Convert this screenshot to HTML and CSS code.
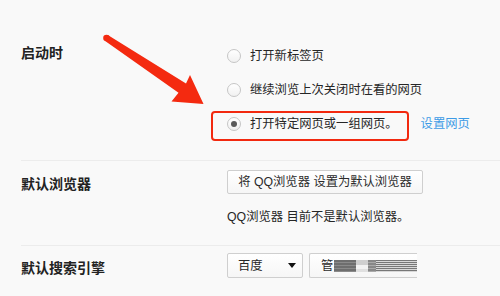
FILE: index.html
```html
<!DOCTYPE html>
<html lang="zh-CN">
<head>
<meta charset="utf-8">
<title>设置</title>
<link rel="stylesheet" href="styles.css">
</head>
<body>
<div class="page">
  <section class="section startup">
    <div class="label label-startup">启动时</div>
    <div class="options">
      <div class="option"><span class="radio"></span><span>打开新标签页</span></div>
      <div class="option"><span class="radio"></span><span>继续浏览上次关闭时在看的网页</span></div>
      <div class="option option-marked">
        <span class="radio checked"></span><span>打开特定网页或一组网页。</span>
        <a class="link">设置网页</a>
        <span class="highlight"></span>
      </div>
    </div>
  </section>
  <section class="section browser">
    <div class="label label-browser">默认浏览器</div>
    <div class="stack">
      <button class="btn btn-default">将 QQ浏览器 设置为默认浏览器</button>
      <div class="note">QQ浏览器 目前不是默认浏览器。</div>
    </div>
  </section>
  <section class="section search">
    <div class="label label-search">默认搜索引擎</div>
    <div class="controls">
      <div class="select"><span>百度</span><span class="caret"></span></div>
      <div class="btn btn-manage"><span>管</span><span class="mosaic"><i class="m1"></i><i class="m2"></i><i class="m3"></i><i class="m4"></i></span></div>
    </div>
  </section>
  <svg class="arrow" viewBox="0 0 500 296" width="500" height="296">
    <circle cx="106.5" cy="38" r="3.3" fill="#f42a10"/>
    <polygon points="108.2,35.3 186,83.5 190,75 203.5,104 171.5,101.5 178.5,92.8 104.8,40.7" fill="#f42a10"/>
  </svg>
</div>
</body>
</html>
```
FILE: styles.css
```css
* { box-sizing: border-box; }
html, body { margin: 0; padding: 0; }
body {
  background: #f9f9f9;
  font-family: "Liberation Sans", "Noto Sans CJK SC", sans-serif;
  font-size: 12.3px;
  color: #262626;
  width: 500px;
  height: 296px;
  overflow: hidden;
}
.page { position: relative; width: 500px; height: 296px; }
.section {
  display: grid;
  grid-template-columns: 206px 1fr;
  margin-left: 21px;
  border-bottom: 1px solid #ececec;
}
.label {
  font-family: "Noto Sans CJK SC", sans-serif;
  font-size: 14px;
  font-weight: 700;
  color: #222;
  line-height: 20px;
}
.startup { height: 161px; }
.label-startup { margin-top: 42px; }
.options { padding-top: 39px; }
.option {
  position: relative;
  display: flex;
  align-items: center;
  height: 34px;
  line-height: 20px;
}
.radio {
  width: 14px;
  height: 14px;
  border-radius: 50%;
  border: 1px solid #c6c6c6;
  background: linear-gradient(#ffffff, #f1f1f1);
  margin-right: 9px;
  display: flex;
  align-items: center;
  justify-content: center;
  flex: none;
}
.radio.checked::after {
  content: "";
  width: 6px;
  height: 6px;
  border-radius: 50%;
  background: #5a5a5a;
}
.link {
  color: #3d9be6;
  margin-left: 23px;
  cursor: pointer;
}
.highlight {
  position: absolute;
  left: -16px;
  top: 4px;
  width: 198px;
  height: 30px;
  border: 2px solid #f2290f;
  border-radius: 4px;
}
.browser { height: 85px; padding-top: 9px; }
.label-browser { line-height: 26px; }
.stack { display: flex; flex-direction: column; align-items: flex-start; }
.btn {
  height: 24px;
  border: 1px solid #cfcfcf;
  border-radius: 2px;
  background: linear-gradient(#ffffff, #f6f6f6);
  font: inherit;
  color: #2b2b2b;
  padding: 0 10px;
  line-height: 22px;
}
.btn-default { width: 196px; text-align: center; padding: 0; }
.note { margin-top: 13px; line-height: 20px; }
.search { border-bottom: none; padding-top: 7px; }
.label-search { line-height: 25px; margin-top: 2px; }
.controls { display: flex; gap: 6px; }
.select {
  width: 76px;
  height: 25px;
  border: 1px solid #cfcfcf;
  border-radius: 2px;
  background: linear-gradient(#ffffff, #f6f6f6);
  display: flex;
  align-items: center;
  justify-content: space-between;
  padding: 0 6px 0 10px;
  line-height: 20px;
}
.caret {
  width: 0;
  height: 0;
  border-left: 4px solid transparent;
  border-right: 4px solid transparent;
  border-top: 5px solid #111;
}
.btn-manage {
  width: 108px;
  height: 25px;
  border-right: none;
  border-radius: 2px 0 0 2px;
  display: flex;
  align-items: center;
  padding: 0 0 0 11px;
  overflow: hidden;
}
.mosaic { display: flex; height: 12px; margin-left: 1px; }
.mosaic i { display: block; height: 12px; }
.m1 { width: 22px; background: repeating-linear-gradient(#6e6e6e 0 2px, #8a8a8a 2px 3px); }
.m2 { width: 12px; background: linear-gradient(#cfcfcf 0 5px, #f2f2f2 5px 9px, #e0e0e0 9px); }
.m3 { width: 8px; background: repeating-linear-gradient(#888 0 2px, #aaa 2px 3px); }
.m4 { width: 50px; background: repeating-linear-gradient(#777 0 1px, #d8d8d8 1px 2px); }
.arrow {
  position: absolute;
  left: 0;
  top: 0;
  pointer-events: none;
}
```
